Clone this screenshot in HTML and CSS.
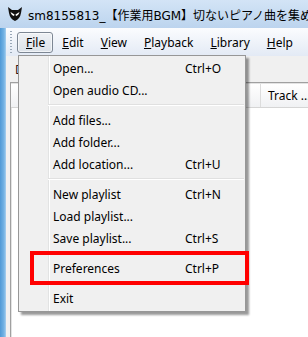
FILE: index.html
```html
<!DOCTYPE html>
<html>
  <head>
    <title>foobar2000</title>
    <link rel="stylesheet" href="styles.css">
  </head>
  <body>
    <div class="window">
      <div class="titlebar">
        <svg class="app-icon" viewBox="0 0 16 16">
          <path d="M1 1 L5 4 L11 4 L15 1 L14 7 Q13 13 8 15 Q3 13 2 7 Z" fill="#111"/>
          <path d="M3.5 6 L7.5 8.5 L7 10 Q4.5 9.5 3.5 6 Z" fill="#fff"/>
          <path d="M12.5 6 L8.5 8.5 L9 10 Q11.5 9.5 12.5 6 Z" fill="#fff"/>
        </svg>
        <span class="title">sm8155813_【作業用BGM】切ないピアノ曲を集めた</span>
      </div>

      <div class="frame">
        <div class="client">
          <div class="menubar">
            <span class="grip"></span>
            <span class="menu-item is-open"><u>F</u>ile</span>
            <span class="menu-item"><u>E</u>dit</span>
            <span class="menu-item"><u>V</u>iew</span>
            <span class="menu-item"><u>P</u>layback</span>
            <span class="menu-item"><u>L</u>ibrary</span>
            <span class="menu-item"><u>H</u>elp</span>
          </div>
          <div class="workspace">
            <div class="tabs">
              <span class="tab">Default</span>
            </div>
            <div class="playlist">
              <div class="playlist-head">
                <div class="head-cell head-main"></div>
                <div class="head-cell">Track ...</div>
              </div>
            </div>
          </div>
        </div>
      </div>

      <div class="dropdown">
        <div class="dd-item"><span class="dd-label">Open...</span><span>Ctrl+O</span></div>
        <div class="dd-item"><span class="dd-label">Open audio CD...</span></div>
        <div class="dd-sep"></div>
        <div class="dd-item"><span class="dd-label">Add files...</span></div>
        <div class="dd-item"><span class="dd-label">Add folder...</span></div>
        <div class="dd-item"><span class="dd-label">Add location...</span><span>Ctrl+U</span></div>
        <div class="dd-sep"></div>
        <div class="dd-item"><span class="dd-label">New playlist</span><span>Ctrl+N</span></div>
        <div class="dd-item"><span class="dd-label">Load playlist...</span></div>
        <div class="dd-item"><span class="dd-label">Save playlist...</span><span>Ctrl+S</span></div>
        <div class="dd-sep"></div>
        <div class="dd-item"><span class="dd-label">Preferences</span><span>Ctrl+P</span></div>
        <div class="dd-sep"></div>
        <div class="dd-item"><span class="dd-label">Exit</span></div>
      </div>

      <div class="callout"></div>
    </div>
  </body>
</html>
```

FILE: styles.css
```css
body{
  margin: 0;
  width: 308px;
  height: 337px;
  overflow: hidden;
  background-color: white;
  font-family: "Noto Sans", Arial, sans-serif;
  font-size: 12px;
  color: black;
}
.window{
  position: relative;
  width: 308px;
  height: 337px;
  display: flex;
  flex-direction: column;
}
.titlebar{
  height: 28px;
  flex: none;
  display: flex;
  align-items: center;
  padding-left: 7px;
  box-sizing: border-box;
  white-space: nowrap;
  overflow: hidden;
  background: linear-gradient(#d3e4f6, #bcd4ee);
}
.app-icon{
  width: 16px;
  height: 16px;
  flex: none;
  margin-right: 5px;
}
.title{
  font-family: "DejaVu Sans", "Noto Sans CJK JP", sans-serif;
  font-size: 12px;
  color: black;
}
.frame{
  flex: 1;
  display: flex;
  padding-left: 6px;
  background: linear-gradient(to right, #4f99d6, #74b3e4 4px, #a9d0ef 6px);
}
.client{
  flex: 1;
  display: flex;
  flex-direction: column;
  background-color: #f0f0f0;
}
.menubar{
  height: 28px;
  flex: none;
  display: flex;
  align-items: center;
  padding-left: 4px;
  background: linear-gradient(#fbfcfe, #e3eaf5);
}
.grip{
  width: 2px;
  height: 22px;
  margin-right: 5px;
  background: repeating-linear-gradient(#9aa8b8 0, #9aa8b8 1px, transparent 1px, transparent 3px);
}
.menu-item{
  height: 21px;
  line-height: 19px;
  padding: 0 7px 0 8px;
  border: 1px solid transparent;
  border-radius: 3px;
  box-sizing: border-box;
}
.menu-item.is-open{
  border-color: #7d8794;
  background: linear-gradient(#eef1f5, #dce2e9);
  box-shadow: inset 0 0 0 1px rgba(255, 255, 255, 0.6);
}
.workspace{
  flex: 1;
  display: flex;
  flex-direction: column;
  padding-left: 4px;
}
.tabs{
  height: 26px;
  flex: none;
  display: flex;
  align-items: center;
}
.tab{
  padding-left: 5px;
  color: #301010;
}
.playlist{
  flex: 1;
  background-color: white;
  border-top: 1px solid #a0a0a0;
  border-left: 1px solid #a0a0a0;
  box-shadow: inset 1px 1px 0 #e3e3e3;
  padding-top: 1px;
}
.playlist-head{
  height: 23px;
  display: flex;
  background: linear-gradient(#ffffff, #f0f1f3);
  border-bottom: 1px solid #d5d5d5;
}
.head-cell{
  display: flex;
  align-items: center;
  padding-left: 7px;
  white-space: nowrap;
}
.head-main{
  width: 249px;
  padding: 0;
  border-right: 1px solid #dcdcdc;
  flex: none;
}
.dropdown{
  position: absolute;
  left: 18px;
  top: 55px;
  width: 228px;
  padding: 1px 0 2px 0;
  box-sizing: border-box;
  border: 1px solid #979797;
  background: linear-gradient(to right, transparent 29px, #e2e3e3 29px, #e2e3e3 30px, #ffffff 30px, #ffffff 31px, transparent 31px), #f0f0f0;
  box-shadow: 3px 3px 2px rgba(0, 0, 0, 0.4);
}
.dd-item{
  height: 22px;
  display: flex;
  align-items: center;
  padding-left: 34px;
}
.dd-label{
  width: 132px;
}
.dd-sep{
  height: 8px;
  margin: 0 1px 0 29px;
  background: linear-gradient(transparent 3px, #e0e0e0 3px, #e0e0e0 4px, #ffffff 4px, #ffffff 5px, transparent 5px);
}
.callout{
  position: absolute;
  left: 30px;
  top: 251px;
  width: 219px;
  height: 34px;
  box-sizing: border-box;
  border: 4px solid #ff0000;
}
```
